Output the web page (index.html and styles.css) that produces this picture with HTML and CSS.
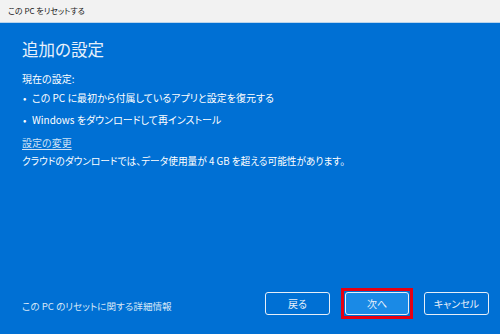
FILE: index.html
```html
<!DOCTYPE html>
<html lang="ja">
<head>
<meta charset="utf-8">
<link rel="stylesheet" href="styles.css">
</head>
<body>
<div class="window">
  <div class="titlebar">この PC をリセットする</div>
  <div class="main">
    <div class="content">
      <h1 class="heading">追加の設定</h1>
      <p class="label">現在の設定:</p>
      <ul class="list">
        <li>この PC に最初から付属しているアプリと設定を復元する</li>
        <li>Windows をダウンロードして再インストール</li>
      </ul>
      <a class="link">設定の変更</a>
      <p class="note">クラウドのダウンロードでは、データ使用量が 4 GB を超える可能性があります。</p>
    </div>
    <div class="footer">
      <span class="more">この PC のリセットに関する詳細情報</span>
      <div class="buttons">
        <button class="btn">戻る</button>
        <span class="mark"><button class="btn primary">次へ</button></span>
        <button class="btn">キャンセル</button>
      </div>
    </div>
  </div>
</div>
</body>
</html>
```
FILE: styles.css
```css
html, body {
  margin: 0;
  padding: 0;
}
body {
  width: 500px;
  height: 334px;
  overflow: hidden;
  font-family: "Noto Sans CJK JP", "Noto Sans", sans-serif;
  font-feature-settings: "palt";
}
.window {
  display: flex;
  flex-direction: column;
  height: 334px;
}
.titlebar {
  height: 22px;
  background: #f2f2f2;
  border-bottom: 1px solid #b9d4ec;
  font-size: 8px;
  line-height: 22px;
  color: #1a1a1a;
  padding-left: 8px;
  white-space: pre;
}
.main {
  flex: 1;
  background: #0070d4;
  color: #ffffff;
  display: flex;
  flex-direction: column;
  justify-content: space-between;
}
.content {
  padding: 14px 22px 0 22px;
  font-size: 10px;
}
.heading {
  margin: 0;
  font-size: 16.5px;
  font-weight: normal;
  line-height: 24px;
  color: #e8f1fb;
}
.label {
  margin: 11px 0 0 0;
  line-height: 14px;
}
.list {
  list-style: none;
  margin: 5px 0 0 0;
  padding: 0;
}
.list li {
  position: relative;
  padding-left: 10px;
  line-height: 14px;
  margin-bottom: 8px;
}
.list li::before {
  content: "•";
  position: absolute;
  left: 1px;
  top: 0;
}
.link {
  display: inline-block;
  line-height: 14px;
  color: #cfe2f6;
  text-decoration: underline;
  text-underline-offset: 2px;
}
.note {
  margin: 4px 0 0 0;
  line-height: 14px;
  font-size: 9.7px;
}
.footer {
  display: flex;
  align-items: center;
  justify-content: space-between;
  padding: 0 11px 15px 22px;
}
.more {
  font-size: 9.6px;
  color: #d6e6f7;
  margin-top: 4px;
}
.buttons {
  display: flex;
  align-items: center;
  gap: 11px;
}
.mark {
  display: flex;
  border: 3px solid #e60012;
  padding: 1px;
}
.btn {
  width: 65px;
  height: 23px;
  border: 1.5px solid #e6eef8;
  border-radius: 3px;
  background: transparent;
  color: #e8f1fb;
  font-family: inherit;
  font-feature-settings: "palt";
  font-size: 10px;
  padding: 0;
}
.primary {
  width: 64px;
  background: #1a8ae6;
}
```
